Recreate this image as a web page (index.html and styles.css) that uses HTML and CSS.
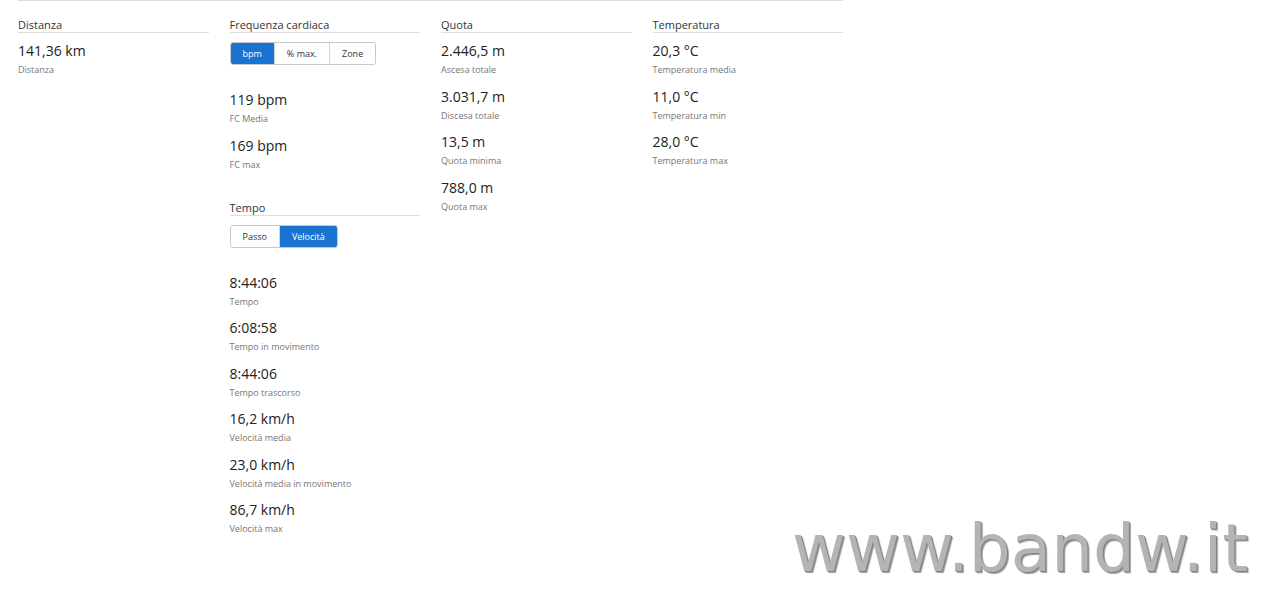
FILE: index.html
```html
<!DOCTYPE html>
<html lang="it">
<head>
    <meta charset="UTF-8">
    <meta name="viewport" content="width=device-width, initial-scale=1.0">
    <title>Statistiche attività</title>
    <link rel="stylesheet" href="styles.css">
</head>
<body>
    <div class="stats">
        <!-- Distanza -->
        <div class="stat-col">
            <div class="stat-section">
                <h3 class="stat-title">Distanza</h3>
                <div class="stat-list">
                    <div class="stat">
                        <div class="stat-value">141,36 km</div>
                        <div class="stat-label">Distanza</div>
                    </div>
                </div>
            </div>
        </div>

        <!-- Frequenza cardiaca + Tempo -->
        <div class="stat-col">
            <div class="stat-section">
                <h3 class="stat-title">Frequenza cardiaca</h3>
                <div class="toggle">
                    <button class="active">bpm</button>
                    <button>% max.</button>
                    <button>Zone</button>
                </div>
                <div class="stat-list spaced">
                    <div class="stat">
                        <div class="stat-value">119 bpm</div>
                        <div class="stat-label">FC Media</div>
                    </div>
                    <div class="stat">
                        <div class="stat-value">169 bpm</div>
                        <div class="stat-label">FC max</div>
                    </div>
                </div>
            </div>

            <div class="stat-section">
                <h3 class="stat-title">Tempo</h3>
                <div class="toggle">
                    <button>Passo</button>
                    <button class="active">Velocità</button>
                </div>
                <div class="stat-list spaced">
                    <div class="stat">
                        <div class="stat-value">8:44:06</div>
                        <div class="stat-label">Tempo</div>
                    </div>
                    <div class="stat">
                        <div class="stat-value">6:08:58</div>
                        <div class="stat-label">Tempo in movimento</div>
                    </div>
                    <div class="stat">
                        <div class="stat-value">8:44:06</div>
                        <div class="stat-label">Tempo trascorso</div>
                    </div>
                    <div class="stat">
                        <div class="stat-value">16,2 km/h</div>
                        <div class="stat-label">Velocità media</div>
                    </div>
                    <div class="stat">
                        <div class="stat-value">23,0 km/h</div>
                        <div class="stat-label">Velocità media in movimento</div>
                    </div>
                    <div class="stat">
                        <div class="stat-value">86,7 km/h</div>
                        <div class="stat-label">Velocità max</div>
                    </div>
                </div>
            </div>
        </div>

        <!-- Quota -->
        <div class="stat-col">
            <div class="stat-section">
                <h3 class="stat-title">Quota</h3>
                <div class="stat-list">
                    <div class="stat">
                        <div class="stat-value">2.446,5 m</div>
                        <div class="stat-label">Ascesa totale</div>
                    </div>
                    <div class="stat">
                        <div class="stat-value">3.031,7 m</div>
                        <div class="stat-label">Discesa totale</div>
                    </div>
                    <div class="stat">
                        <div class="stat-value">13,5 m</div>
                        <div class="stat-label">Quota minima</div>
                    </div>
                    <div class="stat">
                        <div class="stat-value">788,0 m</div>
                        <div class="stat-label">Quota max</div>
                    </div>
                </div>
            </div>
        </div>

        <!-- Temperatura -->
        <div class="stat-col">
            <div class="stat-section">
                <h3 class="stat-title">Temperatura</h3>
                <div class="stat-list">
                    <div class="stat">
                        <div class="stat-value">20,3 °C</div>
                        <div class="stat-label">Temperatura media</div>
                    </div>
                    <div class="stat">
                        <div class="stat-value">11,0 °C</div>
                        <div class="stat-label">Temperatura min</div>
                    </div>
                    <div class="stat">
                        <div class="stat-value">28,0 °C</div>
                        <div class="stat-label">Temperatura max</div>
                    </div>
                </div>
            </div>
        </div>
    </div>

    <div class="watermark">www.bandw.it</div>
</body>
</html>
```

FILE: styles.css
```css
body {
    margin: 0;
    background: #fff;
    font-family: "Open Sans", "Noto Sans", sans-serif;
    color: #222;
}

.stats {
    width: 825px;
    margin-left: 18px;
    padding-top: 17px;
    border-top: 1px solid #ddd;
    display: grid;
    grid-template-columns: repeat(4, 1fr);
    column-gap: 21px;
    align-items: start;
}

.stat-section + .stat-section {
    margin-top: 30px;
}

.stat-title {
    margin: 0;
    font-size: 11px;
    font-weight: normal;
    line-height: 14px;
    color: #333;
    border-bottom: 1px solid #ddd;
}

.stat-list {
    margin-top: 8px;
}

.stat-list.spaced {
    margin-top: 25px;
}

.stat {
    margin-bottom: 10.5px;
}

.stat-value {
    font-size: 14px;
    line-height: 20px;
    color: #222;
}

.stat-label {
    margin-top: 2px;
    font-size: 9px;
    line-height: 13px;
    color: #777;
}

.toggle {
    display: inline-flex;
    margin-top: 9px;
    border: 1px solid #c8c8c8;
    border-radius: 3px;
    overflow: hidden;
}

.toggle button {
    height: 21px;
    padding: 0 12px;
    border: none;
    border-left: 1px solid #d6d6d6;
    background: #fff;
    color: #333;
    font-family: inherit;
    font-size: 9px;
    cursor: pointer;
}

.toggle button:first-child {
    border-left: none;
}

.toggle button.active {
    background: #1a73d1;
    color: #fff;
}

.watermark {
    position: absolute;
    left: 792px;
    top: 510px;
    font-family: "DejaVu Sans", sans-serif;
    font-size: 66px;
    color: #b4b4b4;
    text-shadow: 1px 1px 0 #808080, 2px 2px 1px #a0a0a0;
}
```
